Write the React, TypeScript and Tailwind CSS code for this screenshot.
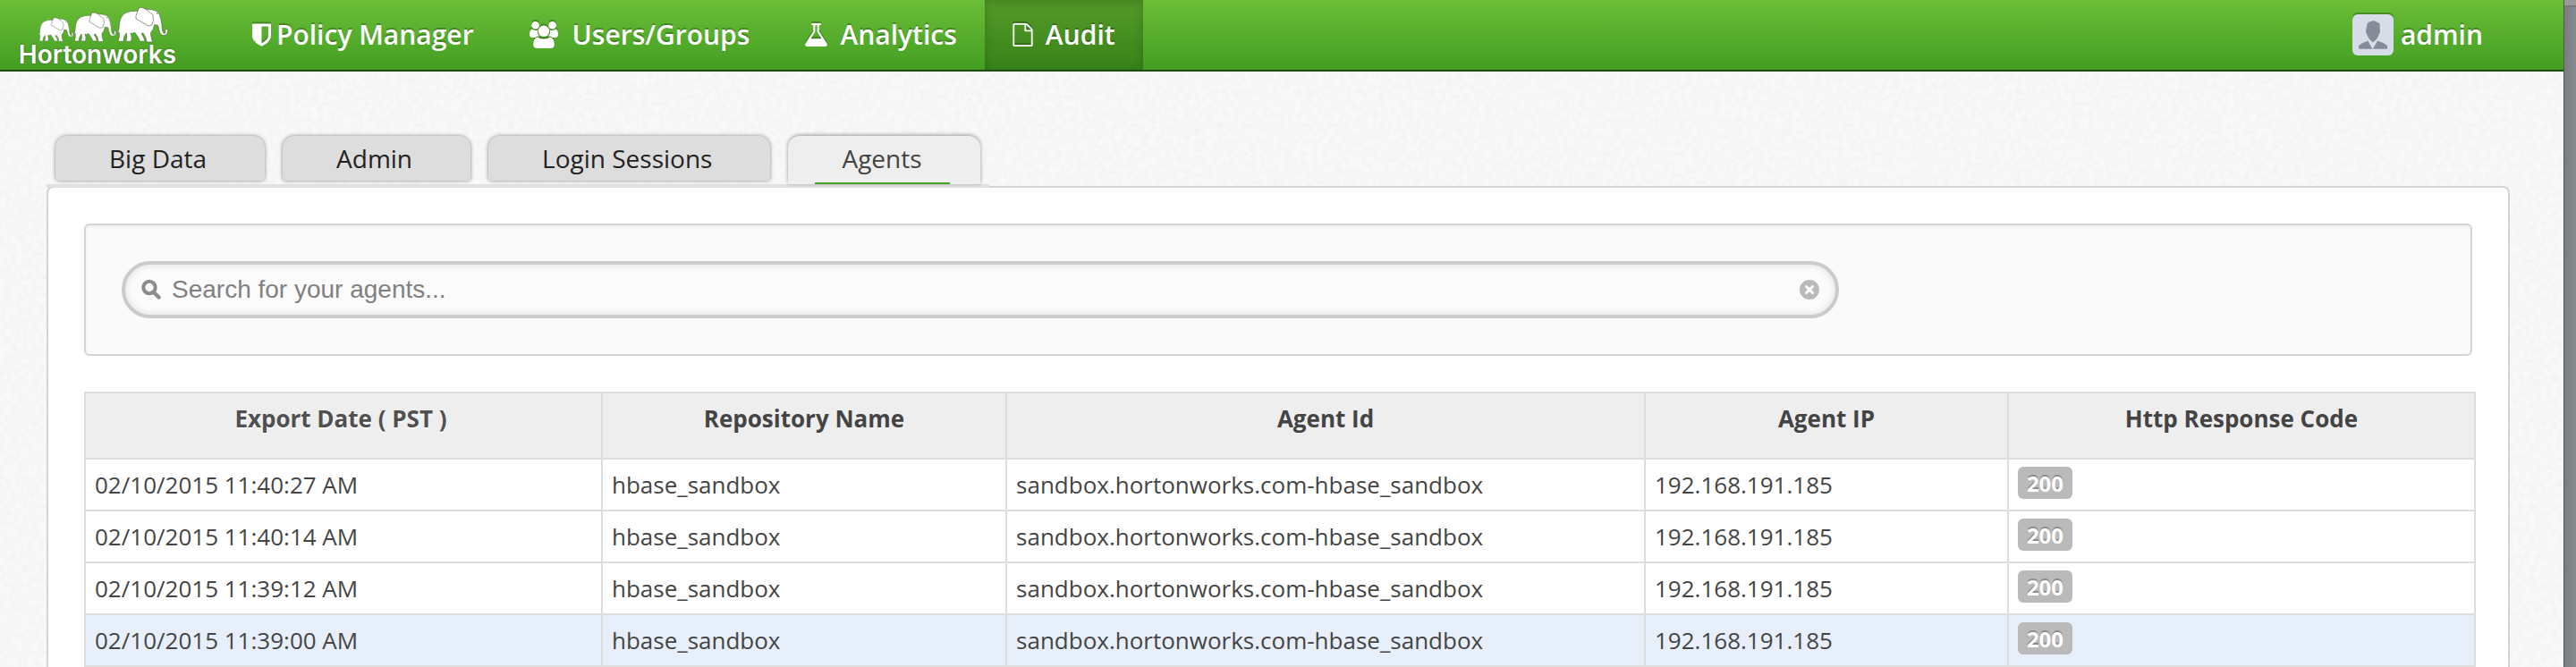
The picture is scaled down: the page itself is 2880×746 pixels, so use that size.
import type { ReactNode } from "react";

function ShieldIcon() {
  return (
    <svg className="h-[26px] w-[21px]" viewBox="256 128 1280 1536" fill="currentColor" aria-hidden="true">
      <path d="M1344 960v-640h-448v1137q119-63 213-137 235-184 235-360zm192-768v768q0 86-33.5 170.5t-83 150-118 127.5-126.5 103-121 77.5-89.5 49.5-42.5 20q-12 6-26 6t-26-6q-16-7-42.5-20t-89.5-49.5-121-77.5-126.5-103-118-127.5-83-150-33.5-170.5v-768q0-26 19-45t45-19h1152q26 0 45 19t19 45z" />
    </svg>
  );
}

function GroupIcon() {
  return (
    <svg className="h-[32px] w-[32px]" viewBox="0 0 32 32" fill="currentColor" aria-hidden="true">
      <circle cx="6.6" cy="5.2" r="4.3" />
      <circle cx="25.6" cy="5.2" r="4.3" />
      <path d="M2.6 9.6Q4.6 11 6.6 11T9 10.4Q8.4 15.2 11.2 17.6Q8 17.2 6.4 19H3Q0 18.6 0 15.4Q0 10.6 2.6 9.6Z" />
      <path d="M29.4 9.6Q27.4 11 25.4 11T23 10.4Q23.6 15.2 20.8 17.6Q24 17.2 25.6 19H29Q32 18.6 32 15.4Q32 10.6 29.4 9.6Z" />
      <circle cx="16" cy="11.8" r="6.2" />
      <path d="M9 18.4Q12.4 20.6 16 20.6T23 18.4Q27.8 19.6 27.8 27Q27.8 31 23.6 31H8.4Q4.2 31 4.2 27Q4.2 19.6 9 18.4Z" />
    </svg>
  );
}

function FlaskIcon() {
  return (
    <svg className="h-[26px] w-[25px]" viewBox="160 128 1472 1536" fill="currentColor" aria-hidden="true">
      <path d="M1591 1448q56 89 21.5 152.5t-140.5 63.5h-1152q-106 0-140.5-63.5t21.5-152.5l503-793v-399h-64q-26 0-45-19t-19-45 19-45 45-19h512q26 0 45 19t19 45-19 45-45 19h-64v399zm-779-725l-272 429h712l-272-429-20-31v-436h-128v436z" />
    </svg>
  );
}

function FileIcon() {
  return (
    <svg className="h-[26px] w-[23px]" viewBox="128 0 1536 1792" fill="currentColor" aria-hidden="true">
      <path d="M1596 380q28 28 48 76t20 88v1152q0 40-28 68t-68 28h-1344q-40 0-68-28t-28-68v-1600q0-40 28-68t68-28h896q40 0 88 20t76 48zm-444-244v376h376q-10-29-22-41l-313-313q-12-12-41-22zm384 1528v-1024h-416q-40 0-68-28t-28-68v-416h-768v1536h1280z" />
    </svg>
  );
}

function Elephant({ transform }: { transform: string }) {
  return (
    <g transform={transform} stroke="#4c6b3d" strokeWidth="2" strokeLinejoin="round">
      <path
        fill="#fff"
        d="M6 84L0 88Q6 74 6 58Q8 28 28 18Q44 10 68 12L72 1Q80-2 92 4L98 6Q122 6 134 14Q142 22 146 42Q150 60 150 74Q152 86 158 88Q163 86 160 74L168 72Q170 88 162 92Q148 98 142 84Q138 70 136 60L124 58Q122 74 112 84Q110 94 118 116H98Q96 98 86 86L80 88Q90 100 92 114H76Q70 98 58 84Q48 90 44 86Q50 98 46 114H28Q34 100 30 86Q20 96 20 114H2Q8 98 6 84Z"
      />
      <path fill="#fff" d="M72 1Q82-2 94 5L118 24Q124 44 116 58Q108 64 100 60L62 38Q60 30 66 18Z" />
      <circle cx="133" cy="20" r="2.4" fill="#4c6b3d" stroke="none" />
    </g>
  );
}

function Logo() {
  return (
    <a href="#home" className="flex w-[178px] flex-col items-center text-white" aria-label="Hortonworks">
      <svg className="mt-[7px] ml-[22px] h-[41px] w-[147px] self-start" viewBox="126 20 441 123" aria-hidden="true">
        <Elephant transform="translate(130 58) scale(0.69)" />
        <Elephant transform="translate(248 41) scale(0.84)" />
        <Elephant transform="translate(394 24)" />
      </svg>
      <span className="font-['Inter',sans-serif] text-[28px] leading-[26px] font-semibold [text-shadow:0_0_2px_#35551f]">
        Hortonworks
      </span>
    </a>
  );
}

function Avatar() {
  return (
    <svg className="h-[46px] w-[46px] rounded-md bg-[#d6dde6] shadow-[0_-2px_0_rgba(0,0,0,0.25)]" viewBox="0 0 46 46" fill="#858b99" aria-hidden="true">
      <path d="M16 14Q16 9 20 8.200Q24 6 28 9Q31.400 9.500 30.600 14L31 19Q30.600 22 29.400 23Q28.500 27.500 23 31.500Q17.500 27.500 16.600 23Q15.400 22 15 19Z" />
      <path d="M17.400 29.800L22.400 38.800H7V35.500Q10 32 17.400 29.800ZM28 29.800L22.800 38.800H39V35.500Q36 32 28 29.800Z" />
    </svg>
  );
}

function NavItem({ icon, label, gap, active = false }: { icon: ReactNode; label: string; gap: string; active?: boolean }) {
  return (
    <a
      href="#nav"
      aria-current={active ? "page" : undefined}
      className={`flex items-center px-[31px] ${gap} ${
        active ? "bg-[rgba(20,50,0,0.25)] shadow-[inset_0_3px_12px_rgba(0,0,0,0.18)]" : ""
      }`}
    >
      <span className="drop-shadow-[0_-2px_0_rgba(0,0,0,0.25)]">{icon}</span>
      <span className="pb-0.5">{label}</span>
    </a>
  );
}

const tabs = ["Big Data", "Admin", "Login Sessions", "Agents"];

function Tab({ label, active }: { label: string; active: boolean }) {
  return (
    <li className="flex">
      <a
        href="#tab"
        className={`relative rounded-t-[13px] pt-[5px] pr-[65px] pl-[60px] text-[28px] leading-[40px] ${
          active
            ? "bg-[#eee] pb-[9px] text-[#444] shadow-[0_-1px_4px_rgba(0,0,0,0.4)]"
            : "mb-1 rounded-b-sm bg-[#ddd] pb-[5px] text-[#222] shadow-[0_0_4px_rgba(0,0,0,0.45)]"
        }`}
      >
        {label}
        {active && <span className="absolute right-[34px] bottom-0 left-[30px] h-0.5 bg-[#45a023]" />}
      </a>
    </li>
  );
}

const rows = [
  "02/10/2015 11:40:27 AM",
  "02/10/2015 11:40:14 AM",
  "02/10/2015 11:39:12 AM",
  "02/10/2015 11:39:00 AM",
];

const columns = [
  { label: "Export Date ( PST )", style: "w-[21.63%] pr-4 pl-2.5 text-[#505050] [text-shadow:0_2px_0_#fff]" },
  { label: "Repository Name", style: "w-[16.92%] px-2.5 text-[#444]" },
  { label: "Agent Id", style: "w-[26.72%] px-2.5 text-[#444]" },
  { label: "Agent IP", style: "w-[15.19%] px-2.5 text-[#444]" },
  { label: "Http Response Code", style: "w-[19.54%] px-2.5 text-[#444]" },
];

const cell = "border-r-2 border-b-2 border-[#ddd] px-2.5 py-2 align-top";

function AgentTable() {
  return (
    <table className="mt-10 w-full table-fixed border-separate border-spacing-0 border-t-2 border-l-2 border-[#ddd] text-[26px] leading-[40px] text-[#444]">
      <thead>
        <tr className="bg-[#eee]">
          {columns.map((c) => (
            <th key={c.label} className={`border-r-2 border-b-2 border-[#ddd] pt-2 pb-6 text-center align-top font-bold ${c.style}`}>
              {c.label}
            </th>
          ))}
        </tr>
      </thead>
      <tbody>
        {rows.map((date, i) => (
          <tr key={date} className={i === 3 ? "bg-[#e7effb]" : "bg-white"}>
            <td className={cell}>{date}</td>
            <td className={cell}>hbase_sandbox</td>
            <td className={cell}>sandbox.hortonworks.com-hbase_sandbox</td>
            <td className={cell}>192.168.191.185</td>
            <td className={cell}>
              <span className="block w-fit rounded-md bg-[#bababa] px-2.5 pt-1 pb-0.5 text-[24px] leading-[30px] font-bold text-white [text-shadow:0_-2px_0_rgba(0,0,0,0.25)]">
                200
              </span>
            </td>
          </tr>
        ))}
      </tbody>
    </table>
  );
}

function SearchPanel() {
  return (
    <div className="mr-1 rounded-md border-2 border-[#d4d4d4] bg-[#fafafa] p-10 shadow-[inset_0_2px_3px_rgba(0,0,0,0.05)]">
      <div className="flex h-16 w-[74.25%] items-center rounded-full border-4 border-[#cbcbcb] bg-[#fbfbfb] px-[18px] shadow-[inset_0_0_8px_rgba(0,0,0,0.12)]">
        <svg className="h-[24px] w-[22px]" viewBox="0 0 22 24" fill="none" stroke="#8c8c8c" aria-hidden="true">
          <circle cx="9" cy="9.500" r="6.700" strokeWidth="4" />
          <path d="M14 15L19.500 20.500" strokeWidth="4.500" strokeLinecap="round" />
        </svg>
        <input
          type="text"
          aria-label="Search for your agents"
          placeholder="Search for your agents..."
          className="ml-3 h-full min-w-0 flex-1 bg-transparent font-['Liberation_Sans',Arial,sans-serif] text-[28px] text-[#444] outline-none placeholder:text-[#808080]"
        />
        <button type="button" aria-label="Clear search" className="h-[22px] w-[22px]">
          <svg className="h-[22px] w-[22px]" viewBox="0 0 22 22" aria-hidden="true">
            <circle cx="11" cy="11" r="11" fill="#bababa" />
            <path d="M7.500 7.500L14.500 14.500M14.500 7.500L7.500 14.500" stroke="#fff" strokeWidth="3" strokeLinecap="round" />
          </svg>
        </button>
      </div>
    </div>
  );
}

function PaperTexture() {
  return (
    <svg className="absolute inset-0 h-full w-full" aria-hidden="true">
      <filter id="paper" x="0" y="0" width="100%" height="100%">
        <feTurbulence type="fractalNoise" baseFrequency="0.16" numOctaves="3" stitchTiles="stitch" />
        <feColorMatrix values="0 0 0 0 0.7  0 0 0 0 0.7  0 0 0 0 0.7  0.34 0 0 0 -0.09" />
      </filter>
      <rect width="100%" height="100%" filter="url(#paper)" />
    </svg>
  );
}

export default function App() {
  return (
    <div className="flex min-h-screen font-['Open_Sans',sans-serif]">
      <div className="relative flex min-w-0 flex-1 flex-col bg-[#f9f9f9]">
        <PaperTexture />
        <header className="relative flex h-20 justify-between border-b-2 border-[#1f4b10] bg-linear-to-b from-[#6bbe36] to-[#439e23] pr-[90px] pl-[20px] text-[30px] font-semibold text-white [text-shadow:0_-2px_0_rgba(0,0,0,0.25)]">
          <div className="flex">
            <Logo />
            <nav className="ml-[53px] flex" aria-label="Main">
              <NavItem icon={<ShieldIcon />} label="Policy Manager" gap="gap-1.5" />
              <NavItem icon={<GroupIcon />} label="Users/Groups" gap="gap-4" />
              <NavItem icon={<FlaskIcon />} label="Analytics" gap="gap-3.5" />
              <NavItem icon={<FileIcon />} label="Audit" gap="gap-3.5" active />
            </nav>
          </div>
          <a href="#profile" className="flex items-center gap-2">
            <Avatar />
            <span className="pb-0.5">admin</span>
          </a>
        </header>

        <main className="relative flex flex-1 flex-col pt-[72px] pr-[60px] pl-[52px]">
          <ul className="relative z-10 -mb-0.5 flex w-fit gap-5 border-b-4 border-[#e0e0e0] px-2.5">
            {tabs.map((t) => (
              <Tab key={t} label={t} active={t === "Agents"} />
            ))}
          </ul>
          <section className="flex-1 rounded-t-lg border-2 border-b-0 border-[#d4d4d4] bg-white pt-10 pr-9 pl-10">
            <SearchPanel />
            <AgentTable />
          </section>
        </main>
      </div>
      <div className="w-[14px] border-l border-[#55575b] bg-linear-to-r from-[#797c81] to-[#878b90]">
        <div className="h-2 border-b-2 border-[#77777a] bg-[#9a9a9a]" />
      </div>
    </div>
  );
}
